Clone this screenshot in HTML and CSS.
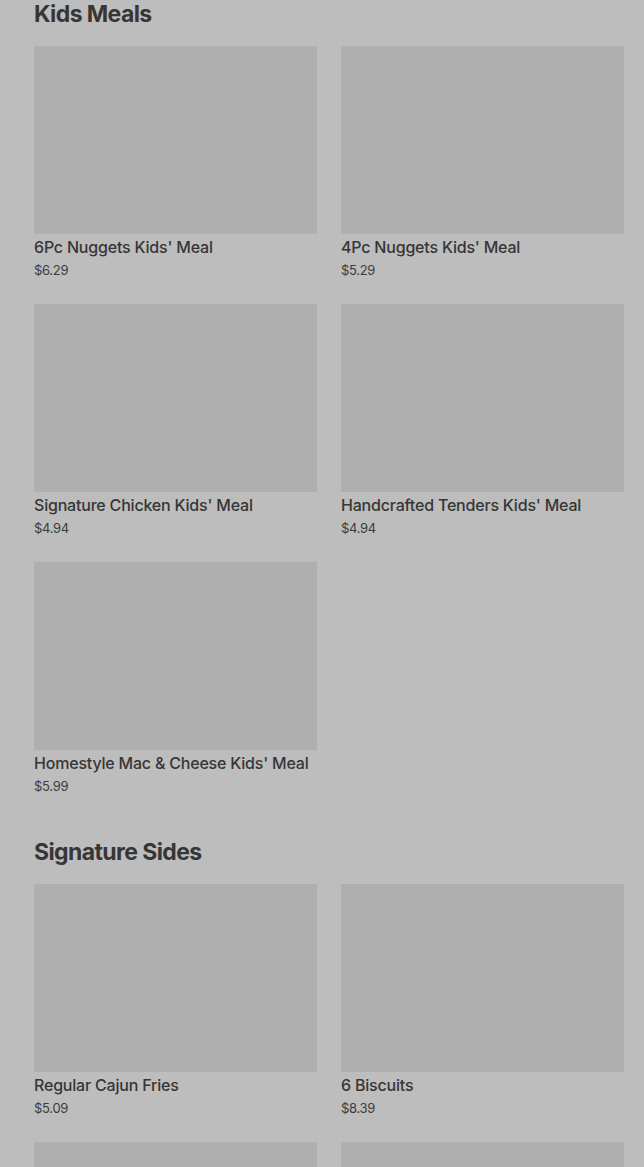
FILE: index.html
```html
<!DOCTYPE html>
<html lang="en">
<head>
    <meta charset="UTF-8">
    <meta name="viewport" content="width=device-width, initial-scale=1.0">
    <title>Menu</title>
    <link rel="stylesheet" href="styles.css">
</head>
<body>
    <main class="menu">
        <section class="menu-section">
            <h2>Kids Meals</h2>
            <div class="item-grid">
                <div class="item">
                    <div class="item-image"></div>
                    <div class="item-name">6Pc Nuggets Kids' Meal</div>
                    <div class="item-price">$6.29</div>
                </div>
                <div class="item">
                    <div class="item-image"></div>
                    <div class="item-name">4Pc Nuggets Kids' Meal</div>
                    <div class="item-price">$5.29</div>
                </div>
                <div class="item">
                    <div class="item-image"></div>
                    <div class="item-name">Signature Chicken Kids' Meal</div>
                    <div class="item-price">$4.94</div>
                </div>
                <div class="item">
                    <div class="item-image"></div>
                    <div class="item-name">Handcrafted Tenders Kids' Meal</div>
                    <div class="item-price">$4.94</div>
                </div>
                <div class="item">
                    <div class="item-image"></div>
                    <div class="item-name">Homestyle Mac &amp; Cheese Kids' Meal</div>
                    <div class="item-price">$5.99</div>
                </div>
            </div>
        </section>

        <section class="menu-section">
            <h2>Signature Sides</h2>
            <div class="item-grid">
                <div class="item">
                    <div class="item-image"></div>
                    <div class="item-name">Regular Cajun Fries</div>
                    <div class="item-price">$5.09</div>
                </div>
                <div class="item">
                    <div class="item-image"></div>
                    <div class="item-name">6 Biscuits</div>
                    <div class="item-price">$8.39</div>
                </div>
                <div class="item">
                    <div class="item-image"></div>
                </div>
                <div class="item">
                    <div class="item-image"></div>
                </div>
            </div>
        </section>
    </main>
</body>
</html>
```

FILE: styles.css
```css
body {
    margin: 0;
    background: #bdbdbd;
    color: #363636;
    font-family: Inter, "Noto Sans", Arial, sans-serif;
    overflow: hidden;
}
.menu {
    padding: 0 20px 0 34px;
}
.menu-section {
    margin-bottom: 42px;
}
h2 {
    margin: 0 0 18px;
    font-size: 23px;
    line-height: 28px;
    font-weight: 700;
    letter-spacing: -0.6px;
    color: #363636;
}
.item-grid {
    display: grid;
    grid-template-columns: 283px 283px;
    column-gap: 24px;
    row-gap: 24px;
}
.item-image {
    height: 188px;
    background: #afafaf;
}
.item-name {
    margin-top: 1px;
    font-size: 16px;
    line-height: 24px;
    font-weight: 500;
    letter-spacing: -0.2px;
    white-space: nowrap;
}
.item-price {
    margin-top: 1px;
    font-size: 13px;
    line-height: 20px;
    letter-spacing: -0.3px;
    color: #3c3c3c;
}
```
